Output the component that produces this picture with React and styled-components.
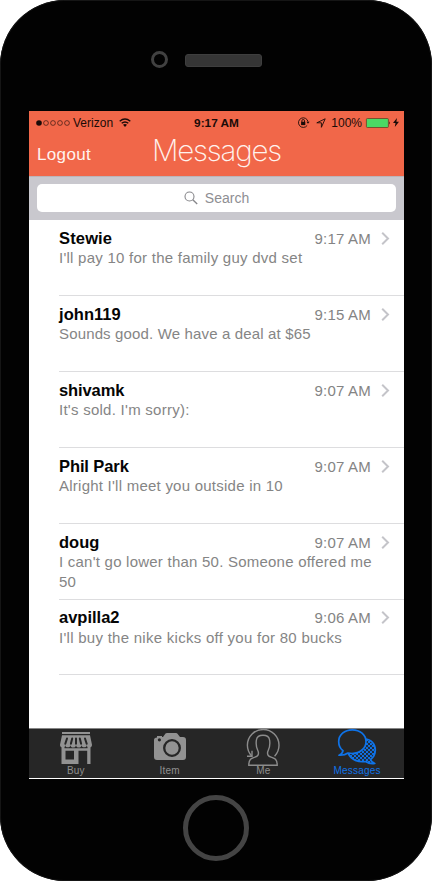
import React from "react";
import styled, { createGlobalStyle } from "styled-components";

const GlobalStyle = createGlobalStyle`
  * { box-sizing: border-box; }
  body { margin: 0; background: #fff; font-family: "Liberation Sans", Arial, sans-serif; }
  svg { display: block; flex: none; overflow: visible; }
`;

const Phone = styled.div`
  width: 432px;
  height: 881px;
  padding: 0 28px 0 29px;
  display: flex;
  flex-direction: column;
  background: #020202;
  border-radius: 65px;
  box-shadow: inset 0 0 0 1px #151515;
`;

const Earpiece = styled.div`
  height: 111px;
  padding: 51px 0 0 122px;
  display: flex;
  align-items: flex-start;
  gap: 17px;
`;

const Lens = styled.div`
  width: 17px;
  height: 17px;
  border: 3px solid #414141;
  border-radius: 50%;
`;

const Speaker = styled.div`
  width: 77px;
  height: 13px;
  margin-top: 3px;
  background: #353535;
  border: 1px solid #3e3e3e;
  border-radius: 3px;
`;

const Screen = styled.main`
  height: 668px;
  display: flex;
  flex-direction: column;
  background: #fff;
  border-bottom: 1px solid #fff;
`;

const Header = styled.header`
  height: 65px;
  background: #f16749;
`;

const StatusBar = styled.div`
  height: 23px;
  padding: 0 5px 0 7px;
  display: grid;
  grid-template-columns: 1fr auto 1fr;
  align-items: center;
  font-size: 12px;
  color: #1a0b08;
`;

const StatusGroup = styled.div`
  display: flex;
  align-items: center;
  justify-content: ${(p) => (p.$end ? "flex-end" : "flex-start")};
`;

const Carrier = styled.span`
  margin: 0 6px 0 3px;
  letter-spacing: 0.02px;
`;

const Clock = styled.span`
  margin-right: 2px;
  font-weight: 700;
  font-size: 11.8px;
`;

const Percent = styled.span`
  margin: 0 4px 0 5px;
`;

const NavBar = styled.div`
  height: 42px;
  padding: 0 8px;
  display: grid;
  grid-template-columns: 1fr auto 1fr;
`;

const NavAction = styled.button`
  justify-self: start;
  align-self: start;
  margin: 11px 0 0;
  padding: 0;
  border: 0;
  background: none;
  font: 17px/20px "Liberation Sans", Arial, sans-serif;
  letter-spacing: 0.35px;
  color: #fff3ee;
`;

const Title = styled.h1`
  margin: 0;
  font: 200 29.5px/32px Inter, sans-serif;
  letter-spacing: -1.15px;
  color: #fff3ee;
`;

const SearchBar = styled.div`
  height: 44px;
  padding: 7px 8px 8px;
  background: #c9c8ce;
  border-top: 1px solid #bdb4b8;
`;

const SearchField = styled.div`
  height: 28px;
  display: flex;
  align-items: center;
  justify-content: center;
  gap: 7px;
  background: #fff;
  border-radius: 5px;
  font-size: 14px;
  color: #8e8e93;
`;

const List = styled.ul`
  flex: 1;
  margin: 0;
  padding: 0 0 0 30px;
  list-style: none;
`;

const Row = styled.li`
  height: 75.92px;
  padding: 9.4px 14px 0 0;
  border-bottom: 1px solid #dddddf;
`;

const RowTop = styled.div`
  height: 18.6px;
  padding-bottom: 0.6px;
  display: flex;
  align-items: center;
`;

const Sender = styled.span`
  flex: 1;
  font-size: 16.5px;
  font-weight: 700;
  letter-spacing: ${(p) => p.$track}px;
  color: #050505;
`;

const Time = styled.time`
  margin-right: 10px;
  font-size: 15px;
  letter-spacing: 0.2px;
  color: #848484;
`;

const Preview = styled.p`
  margin: 0;
  width: 320px;
  font-size: 15px;
  line-height: 20px;
  letter-spacing: ${(p) => p.$track}px;
  color: #858585;
`;

const TabBar = styled.nav`
  height: 50px;
  display: grid;
  grid-template-columns: repeat(4, 1fr);
  background: #262626;
  border-top: 1px solid #858585;
`;

const Tab = styled.div`
  display: flex;
  flex-direction: column;
  align-items: center;
  font-size: 10px;
  line-height: 11px;
  letter-spacing: 0.2px;
  color: ${(p) => (p.$active ? "#0f73e8" : "#8e8e8e")};
`;

const TabLabel = styled.span`
  margin-top: -1px;
`;

const Bottom = styled.div`
  flex: 1;
  padding: 16px 2px 0 0;
  display: flex;
  justify-content: center;
`;

const HomeButton = styled.div`
  width: 66px;
  height: 66px;
  border: 5px solid #444;
  border-radius: 50%;
`;

const SignalDots = () => (
  <svg width="34" height="6" viewBox="0 0 34 6">
    <circle cx="3" cy="3" r="2.8" fill="currentColor" />
    {[10, 17, 24, 31].map((x) => (
      <circle key={x} cx={x} cy="3" r="2.4" fill="none" stroke="currentColor" strokeWidth=".6" />
    ))}
  </svg>
);

const Wifi = () => (
  <svg width="12" height="9" viewBox="0 0 12 9" fill="none" stroke="currentColor" strokeWidth="1.4">
    <path d="M.7 3.2Q6-1.4 11.3 3.2M2.7 5.3Q6 2.5 9.3 5.3" />
    <path d="M4 6.8Q6 5.3 8 6.8L6 9Z" fill="currentColor" stroke="none" />
  </svg>
);

const OrientationLock = () => (
  <svg width="12" height="11" viewBox="0 0 12 11" fill="none" stroke="currentColor" strokeWidth=".9">
    <path d="M9.2 8.4A4.8 4.8 0 1 1 10 4.7" />
    <path d="M8.4 4.7h3.2L10 6.8Z" fill="currentColor" stroke="none" />
    <rect x="3.1" y="4.8" width="4.2" height="3.3" fill="currentColor" stroke="none" />
    <path d="M3.9 5V3.8a1.3 1.3 0 0 1 2.6 0V5" />
  </svg>
);

const LocationArrow = styled.svg`
  margin-left: 6px;
`;

const Battery = () => (
  <svg width="25" height="10" viewBox="0 0 25 10">
    <rect x=".4" y=".5" width="22" height="9" rx="1" fill="#4bd964" stroke="#6a3f25" strokeWidth=".8" />
    <path d="M23.3 3.2q1.5 1.7 0 3.4Z" fill="#1a0b08" />
  </svg>
);

const Bolt = styled.svg`
  margin-left: 2px;
`;

const Magnifier = () => (
  <svg width="14" height="14" viewBox="0 0 14 14" fill="none" stroke="#87878b" strokeWidth="1.1">
    <circle cx="5.5" cy="5.5" r="4.5" />
    <path d="M8.8 8.8 13.2 13" strokeWidth="1.4" />
  </svg>
);

const Chevron = () => (
  <svg width="9" height="13" viewBox="0 0 9 13" fill="none" stroke="#c4c4c9" strokeWidth="2">
    <path d="M1.2.8 7 6.5 1.2 12.2" />
  </svg>
);

const StoreIcon = () => (
  <svg width="32" height="37" viewBox="0 0 32 37" fill="#929292">
    <path d="M2 3h28v2H2ZM2 6.200h28l2 9.500a2.500 2.500 0 0 1-5.200 0 2.600 2.600 0 0 1-5.200 0 2.800 2.800 0 0 1-5.600 0 2.800 2.800 0 0 1-5.600 0 2.600 2.600 0 0 1-5.200 0A2.500 2.500 0 0 1 0 15.700Z" />
    <path d="M7 9.500 5.300 14.800M12.200 9.500l-1.300 5.300M16 9.500v5.300M19.800 9.500l1.300 5.300M25 9.500l1.700 5.300" stroke="#262626" strokeWidth="2" strokeLinecap="round" />
    <path fillRule="evenodd" d="M1.500 17h3v2.300h23V17h3V35H27.200V21.800H18.500V35H1.500ZM5.500 21.800v8.700H14v-8.700Z" />
  </svg>
);

const CameraIcon = () => (
  <svg width="32" height="37" viewBox="0 0 32 37">
    <path d="M3 8.500V7h5v1h1l2.500-3.500Q12 4 13 4h9q1 0 1.500.7L26 8h3q3 0 3 3v17q0 3-3 3H3q-3 0-3-3V11q0-2.500 3-2.500Z" fill="#929292" />
    <circle cx="18" cy="19" r="7.800" fill="#929292" stroke="#262626" strokeWidth="2.300" />
    <circle cx="5.400" cy="10.800" r="1.600" fill="#262626" />
  </svg>
);

const PersonIcon = () => (
  <svg width="34" height="37" viewBox="0 0 34 37" fill="none" stroke="#8c8c8c" strokeWidth="1.400">
    <path d="M5.800 27.200A15.800 15.800 0 1 1 28.600 27.200" />
    <path d="M1 27.300h5v-5.500" />
    <path d="M11.800 21.500c-1.500-3-2-6.500-1.400-10.500.5-3.300 2.900-4.700 6.600-4.700s6.100 1.400 6.600 4.700c.6 4 .1 7.500-1.400 10.500-.7 1.400-.8 3.400-.2 4.600 1 2.200 5.500 2.200 7.500 4.200 1.300 1.500 1.700 3.200 1.700 5.900H2.800c0-2.700.4-4.400 1.700-5.900 2-2 6.500-2 7.500-4.200.6-1.200.5-3.200-.2-4.600Z" />
  </svg>
);

const ChatIcon = () => (
  <svg width="38" height="37" viewBox="0 0 38 37" stroke="#0f73e8" strokeWidth="1.700" strokeLinejoin="round">
    <defs>
      <pattern id="dots" width="4" height="4" patternUnits="userSpaceOnUse">
        <rect width="4" height="4" fill="#0f73e8" stroke="none" />
        <circle cx="1" cy="1" r="1.150" fill="#202832" stroke="none" />
        <circle cx="3" cy="3" r="1.150" fill="#202832" stroke="none" />
      </pattern>
    </defs>
    <path d="M27 10c6 0 10.300 5 10.300 11 0 4-2 7.500-4.800 9.500.5 2 2 3 4.300 4-3.500.6-6.500 0-9-2C20.500 33.500 13 31 10.500 25Z" fill="url(#dots)" />
    <path d="M14.300.8C22 .8 28 5.800 28 12.500S22 24.500 14 24.500l-4-.5c-2.300 1.700-5.500 2.500-9 2.200 2.300-1 3.800-2.500 4-4.500C2 19.500.7 16 .7 12.500.7 5.800 6.500.8 14.300.8Z" fill="#262626" />
  </svg>
);

const messages = [
  { name: "Stewie", time: "9:17 AM", text: "I'll pay 10 for the family guy dvd set", track: 0.25, nameTrack: 0.15 },
  { name: "john119", time: "9:15 AM", text: "Sounds good. We have a deal at $65", track: 0.15, nameTrack: 0.05 },
  { name: "shivamk", time: "9:07 AM", text: "It's sold. I'm sorry):", track: 0.26, nameTrack: -0.1 },
  { name: "Phil Park", time: "9:07 AM", text: "Alright I'll meet you outside in 10", track: 0.24, nameTrack: -0.1 },
  { name: "doug", time: "9:07 AM", text: "I can't go lower than 50. Someone offered me 50", track: 0.23, nameTrack: 0 },
  { name: "avpilla2", time: "9:06 AM", text: "I'll buy the nike kicks off you for 80 bucks", track: 0.27, nameTrack: 0 },
];

const tabs = [
  { label: "Buy", Icon: StoreIcon },
  { label: "Item", Icon: CameraIcon },
  { label: "Me", Icon: PersonIcon },
  { label: "Messages", Icon: ChatIcon, active: true },
];

export default function App() {
  return (
    <>
      <GlobalStyle />
      <Phone>
        <Earpiece>
          <Lens />
          <Speaker />
        </Earpiece>
        <Screen>
          <Header>
            <StatusBar>
              <StatusGroup>
                <SignalDots />
                <Carrier>Verizon</Carrier>
                <Wifi />
              </StatusGroup>
              <Clock>9:17 AM</Clock>
              <StatusGroup $end>
                <OrientationLock />
                <LocationArrow width="10" height="10" viewBox="0 0 10 10" fill="none" stroke="currentColor" strokeWidth=".9">
                  <path d="M.8 4.800 9.200.8 5.400 9.300V4.800Z" />
                </LocationArrow>
                <Percent>100%</Percent>
                <Battery />
                <Bolt width="6" height="9" viewBox="0 0 6 9" fill="currentColor">
                  <path d="M4 0 0 5h2.500L1.800 9 6 3.700H3.400Z" />
                </Bolt>
              </StatusGroup>
            </StatusBar>
            <NavBar>
              <NavAction>Logout</NavAction>
              <Title>Messages</Title>
            </NavBar>
          </Header>
          <SearchBar>
            <SearchField>
              <Magnifier />
              <span>Search</span>
            </SearchField>
          </SearchBar>
          <List>
            {messages.map((m) => (
              <Row key={m.name}>
                <RowTop>
                  <Sender $track={m.nameTrack}>{m.name}</Sender>
                  <Time>{m.time}</Time>
                  <Chevron />
                </RowTop>
                <Preview $track={m.track}>{m.text}</Preview>
              </Row>
            ))}
          </List>
          <TabBar>
            {tabs.map(({ label, Icon, active }) => (
              <Tab key={label} $active={active}>
                <Icon />
                <TabLabel>{label}</TabLabel>
              </Tab>
            ))}
          </TabBar>
        </Screen>
        <Bottom>
          <HomeButton />
        </Bottom>
      </Phone>
    </>
  );
}
